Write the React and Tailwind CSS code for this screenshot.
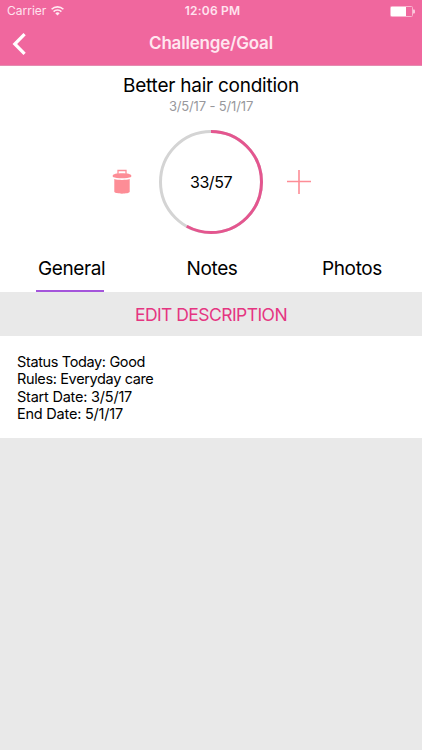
import React, { useState } from 'react'

const TABS = [
  { id: 'general', label: 'General', cls: 'w-[68px] pl-[2px] tracking-[-0.4px]' },
  { id: 'notes', label: 'Notes', cls: 'w-[56px] pl-[2px] tracking-[-0.35px]' },
  { id: 'photos', label: 'Photos', cls: 'w-[68px] tracking-[-0.35px]' },
]

const GOAL = {
  title: 'Better hair condition',
  start: '3/5/17',
  end: '5/1/17',
  done: 33,
  total: 57,
  status: 'Good',
  rules: 'Everyday care',
}

function StatusBar() {
  return (
    <div className="grid grid-cols-3 items-center h-[22px] pl-[7px] pr-[7px] text-[12px] text-[#ffe3ef]">
      <div className="flex items-center gap-[5px]">
        <span>Carrier</span>
        <svg width="13" height="10" viewBox="0 0 13 10" fill="none" stroke="#ffe9f2" strokeWidth="1.6">
          <path d="M0.6 3.3a8.4 8.4 0 0 1 11.800 0" />
          <path d="M2.600 5.600a5.500 5.500 0 0 1 7.800 0" />
          <path d="M4.300 7.300a3.100 3.100 0 0 1 4.400 0L6.500 9.600z" fill="#ffe9f2" stroke="none" />
        </svg>
      </div>
      <span className="text-center font-semibold tracking-[0.2px] pl-[3px]">12:06 PM</span>
      <svg className="justify-self-end" width="25" height="11" viewBox="0 0 25 11">
        <rect x="0.5" y="0.5" width="22" height="10" rx="1" fill="none" stroke="#f9b5d0" />
        <rect x="1" y="1" width="15" height="9" fill="#fff" />
        <path d="M23 3.5h1a1 1 0 0 1 1 1v2a1 1 0 0 1-1 1h-1z" fill="#fbc9dc" />
      </svg>
    </div>
  )
}

function ProgressRing({ done, total }) {
  const r = 50.5
  const len = 2 * Math.PI * r
  return (
    <div className="grid place-items-center w-[104px] h-[104px]">
      <svg className="col-start-1 row-start-1" width="104" height="104" viewBox="0 0 104 104" fill="none" strokeWidth="3">
        <circle cx="52" cy="52" r={r} stroke="#d4d4d4" />
        <circle
          cx="52"
          cy="52"
          r={r}
          stroke="#e4568f"
          strokeDasharray={`${(len * done) / total} ${len}`}
          transform="rotate(-90 52 52)"
        />
      </svg>
      <span className="col-start-1 row-start-1 text-[16px] leading-5 tracking-[-0.45px]">{done}/{total}</span>
    </div>
  )
}

export default function App() {
  const [tab, setTab] = useState('general')

  return (
    <div className="flex flex-col w-full h-screen overflow-hidden bg-[#e9e9e9] text-black font-[Inter,sans-serif]">
      {/* Header */}
      <header className="h-[66px] shrink-0 bg-[#f0679e] border-b border-[#e58bb0]">
        <StatusBar />
        <div className="grid grid-cols-[60px_1fr_60px] items-center h-[43px]">
          <button className="pl-[12px]" aria-label="Back">
            <svg width="15" height="22" viewBox="0 0 15 22" fill="none" stroke="#fff" strokeWidth="3.2">
              <path d="M12.6 1.2L2.8 11L12.6 20.8" />
            </svg>
          </button>
          <h1 className="text-center text-[17px] font-semibold tracking-[-0.2px] text-[#ffe6f0]">Challenge/Goal</h1>
        </div>
      </header>

      {/* Goal summary */}
      <section className="bg-white shrink-0 h-[226px] flex flex-col">
        <h2 className="text-center text-[19px] leading-[24px] mt-[8px] tracking-[-0.25px]">{GOAL.title}</h2>
        <p className="text-center text-[13px] leading-[16px] tracking-[-0.15px] text-[#98989c]">{GOAL.start} - {GOAL.end}</p>
        <div className="flex items-center justify-center gap-[24px] mt-[16px]">
          <button className="w-[25px] flex justify-start pl-[2px]" aria-label="Delete">
            <svg width="20" height="26" viewBox="0 0 20 26" fill="#fd8d96">
              <path d="M6 5V1.5h8V5" fill="none" stroke="#fd8d96" strokeWidth="1.3" />
              <path d="M0.800 6.500C1 5 4.500 4.200 10 4.200s9 0.800 9.200 2.300V8C15 9.800 5 9.800 0.800 8z" />
              <path d="M2.300 10C6 11.200 14 11.200 17.700 10V22.800C17 25.300 3 25.300 2.300 22.800z" />
            </svg>
          </button>
          <ProgressRing done={GOAL.done} total={GOAL.total} />
          <button className="w-[25px] flex justify-start" aria-label="Add">
            <svg width="24" height="24" viewBox="0 0 24 24" stroke="#fd8d96" strokeWidth="1.6">
              <path d="M12 0v24M0 11.5h24" />
            </svg>
          </button>
        </div>

        {/* Tabs */}
        <nav className="mt-auto flex justify-between pl-[36px] pr-[36px]">
          {TABS.map(t => (
            <button
              key={t.id}
              onClick={() => setTab(t.id)}
              className={`h-[37px] pb-[8px] text-[19px] leading-[24px] border-b-2 ${t.cls} ${
                tab === t.id ? 'border-[#a455db]' : 'border-transparent'
              }`}
            >
              {t.label}
            </button>
          ))}
        </nav>
      </section>

      <button className="shrink-0 h-[44px] pt-[2px] text-[17.5px] tracking-[-0.55px] text-[#e53581]">EDIT DESCRIPTION</button>

      {/* Description */}
      <section className="bg-white shrink-0 h-[102px] pl-[17px] pt-[17px] text-[14.5px] leading-[17.3px] tracking-[-0.36px]">
        <p>Status Today: {GOAL.status}</p>
        <p>Rules: {GOAL.rules}</p>
        <p className="tracking-[-0.22px]">Start Date: {GOAL.start}</p>
        <p className="tracking-[-0.22px]">End Date: {GOAL.end}</p>
      </section>
    </div>
  )
}
